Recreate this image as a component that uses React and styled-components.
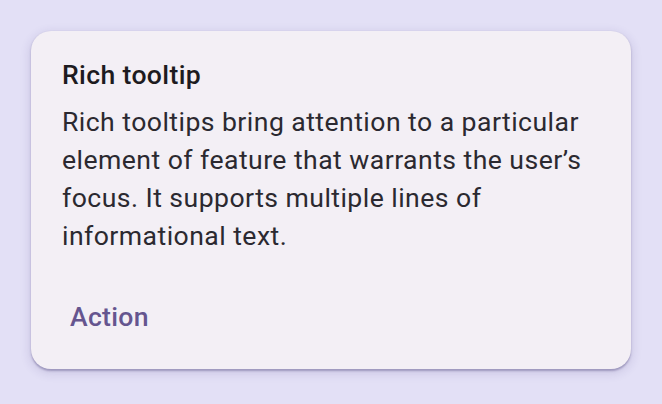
import React from "react";
import styled, { createGlobalStyle } from "styled-components";

const Global = createGlobalStyle`
  html, body { margin: 0; padding: 0; }
  body {
    background: #e3e0f6;
    font-family: Roboto, "Noto Sans", sans-serif;
    width: 662px;
    height: 404px;
    overflow: hidden;
  }
`;

const Page = styled.div`
  box-sizing: border-box;
  width: 662px;
  height: 404px;
  padding: 31px 31px 35px 31px;
  display: flex;
  align-items: flex-start;
`;

const Card = styled.div`
  box-sizing: border-box;
  width: 600px;
  height: 338px;
  background: #f3eff5;
  border-radius: 20px;
  box-shadow: 0 1.5px 2px rgba(50, 40, 100, 0.32), 0 3px 10px 2px rgba(60, 50, 120, 0.13);
  padding: 25px 30px 0 31px;
  display: flex;
  flex-direction: column;
`;

const Title = styled.div`
  font-size: 26.6px;
  font-weight: 500;
  line-height: 38px;
  letter-spacing: 0.35px;
  color: #1d1b20;
`;

const Body = styled.p`
  margin: 9px 0 0 0;
  font-size: 26.6px;
  line-height: 38px;
  letter-spacing: 0.45px;
  color: #2b2930;
  font-weight: 400;
`;

const Actions = styled.div`
  margin-top: 43px;
  display: flex;
`;

const ActionButton = styled.button`
  background: none;
  border: none;
  margin: 0;
  padding: 0 8px;
  font-family: inherit;
  font-size: 26.6px;
  font-weight: 500;
  letter-spacing: 0.3px;
  line-height: 38px;
  color: #65558f;
  cursor: pointer;
`;

export default function App() {
  return (
    <>
      <Global />
      <Page>
        <Card>
          <Title>Rich tooltip</Title>
          <Body>
            Rich tooltips bring attention to a particular element of feature that warrants the user’s focus. It supports multiple lines of informational text.
          </Body>
          <Actions>
            <ActionButton>Action</ActionButton>
          </Actions>
        </Card>
      </Page>
    </>
  );
}
